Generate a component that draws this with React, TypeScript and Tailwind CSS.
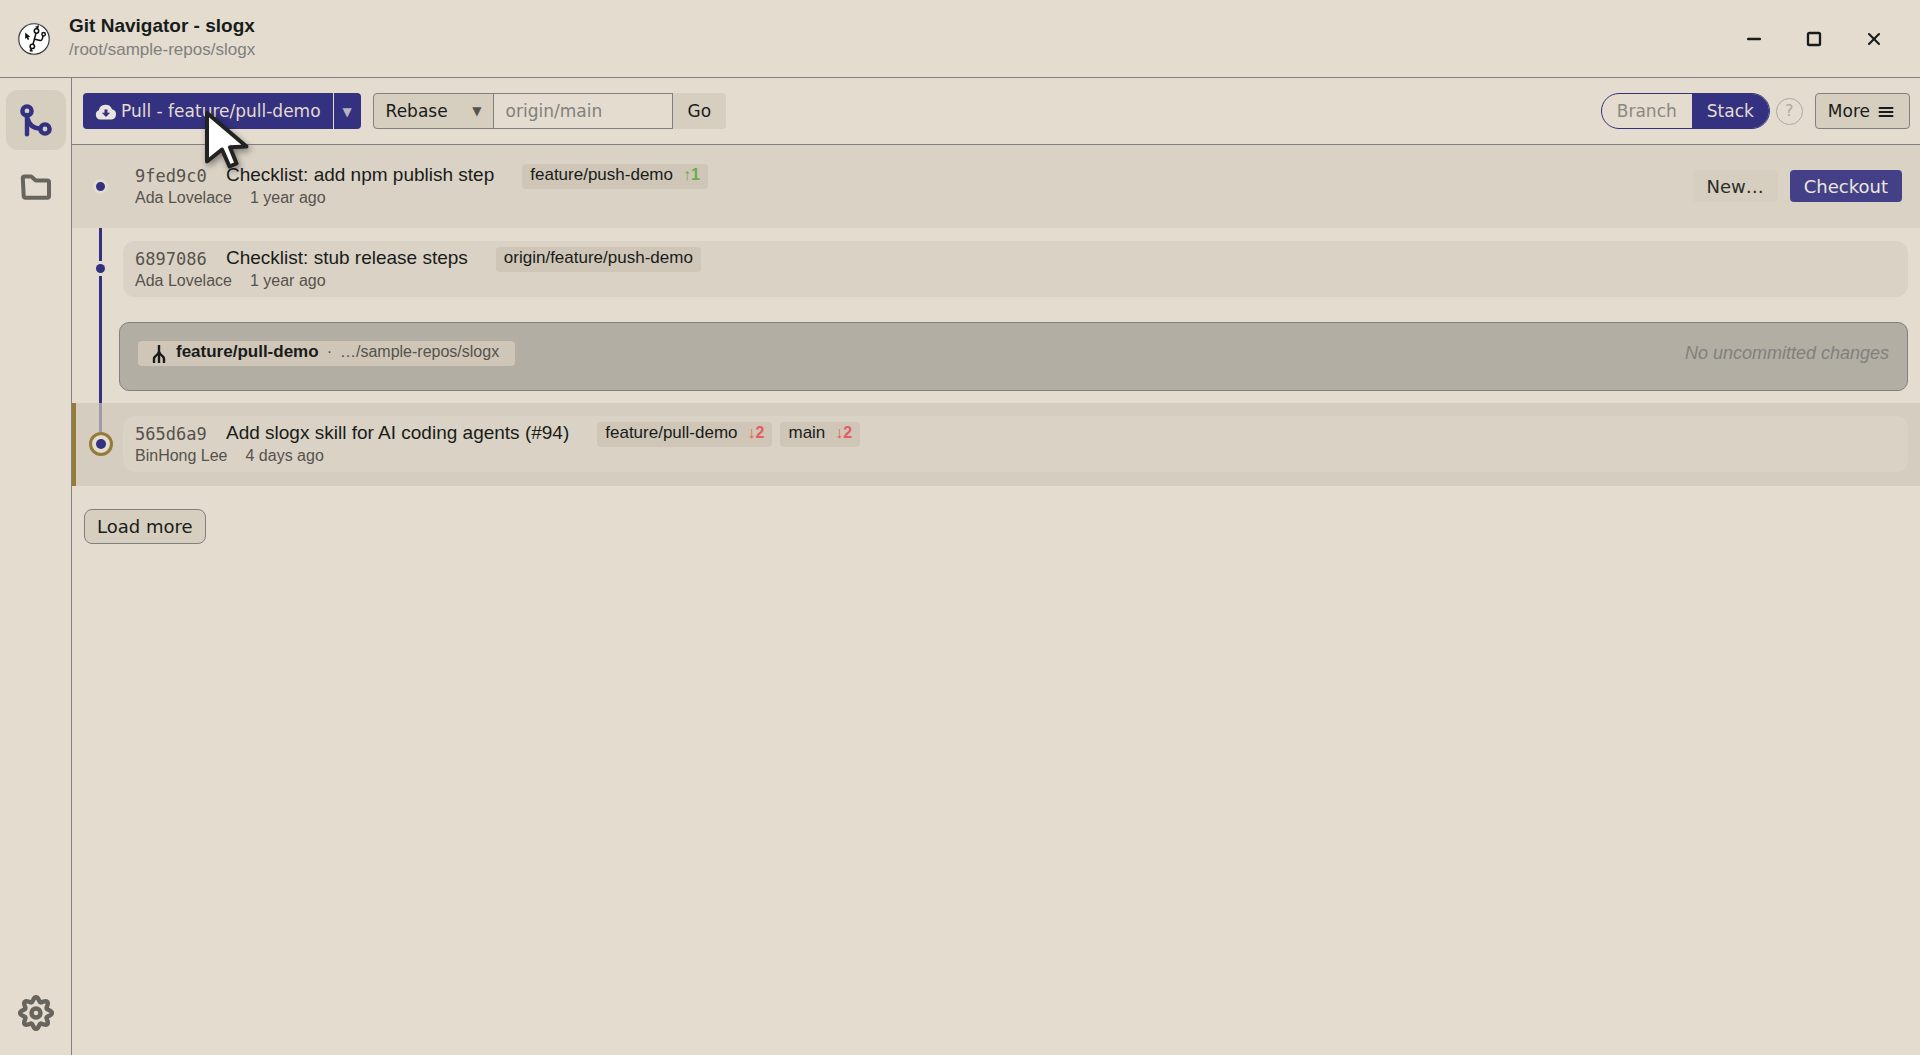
import { useState } from "react";
import { Minus, Square, X } from "lucide-react";

interface Branch {
    name: string;
    ahead?: number;
    behind?: number;
}

interface Commit {
    hash: string;
    title: string;
    author: string;
    date: string;
    branches: Branch[];
}

const COMMITS: Commit[] = [
    {
        hash: "9fed9c0",
        title: "Checklist: add npm publish step",
        author: "Ada Lovelace",
        date: "1 year ago",
        branches: [{ name: "feature/push-demo", ahead: 1 }],
    },
    {
        hash: "6897086",
        title: "Checklist: stub release steps",
        author: "Ada Lovelace",
        date: "1 year ago",
        branches: [{ name: "origin/feature/push-demo" }],
    },
    {
        hash: "565d6a9",
        title: "Add slogx skill for AI coding agents (#94)",
        author: "BinHong Lee",
        date: "4 days ago",
        branches: [
            { name: "feature/pull-demo", behind: 2 },
            { name: "main", behind: 2 },
        ],
    },
];

// eight soft teeth around the centre of a 36x36 box
const GEAR_POINTS = Array.from({ length: 128 }, (_, i) => {
    const a = (i / 128) * Math.PI * 2;
    const r = 13.7 + 2.2 * Math.cos(8 * a);
    return `${(18 + r * Math.cos(a)).toFixed(2)},${(18 + r * Math.sin(a)).toFixed(2)}`;
}).join(" ");

function Logo() {
    return (
        <svg viewBox="0 0 34 34" className="h-[34px] w-[34px]" fill="none" stroke="#111" strokeWidth="1.5">
            <circle cx="17" cy="17" r="16.2" fill="#fff" stroke="#cfcbc0" strokeWidth="1" />
            <circle cx="17" cy="17" r="15.2" fill="#fff" stroke="#333" strokeWidth="1.1" />
            <circle cx="19.5" cy="9" r="2.2" />
            <circle cx="26.6" cy="12.2" r="1.7" />
            <circle cx="15.3" cy="24.4" r="2.2" />
            <path d="M19 11.200 16 22.200M20.400 6.800l.9-3.400M18.600 5h2.600M26 14l-.8 3q-.5 1.600-2 1.400l-5.400-1.200M14.500 26.600l-1 3M12.700 28.200l3 .9" />
            <path d="M8.200 10.600v6.400l1.500-1.200 1.100 2.200 1.400-.8-1-2 2-.5z" fill="#111" stroke="none" />
        </svg>
    );
}

function GraphIcon() {
    return (
        <svg viewBox="0 0 36 36" className="h-9 w-9" fill="none" stroke="#333180" strokeWidth="4.4">
            <circle cx="9" cy="9" r="4.6" />
            <circle cx="27" cy="27" r="4.6" />
            <path d="M9 13v19.200" strokeLinecap="round" />
            <path d="M9.500 16c1.500 7 6 10.500 13 10.500" />
        </svg>
    );
}

function FolderIcon() {
    return (
        <svg viewBox="0 0 36 36" className="h-9 w-9" fill="none" stroke="#67655e" strokeWidth="4" strokeLinejoin="round">
            <path d="M4.800 8.200q0-1.700 1.700-1.700h6.700l4.600 4h11.500q1.700 0 1.700 1.700V26q0 1.800-1.700 1.800H7.500q-1.700 0-1.800-1.800z" />
        </svg>
    );
}

function GearIcon() {
    return (
        <svg viewBox="0 0 36 36" className="h-9 w-9" fill="none" stroke="#67655e" strokeWidth="4.4">
            <circle cx="18" cy="18" r="4.5" />
            <polygon points={GEAR_POINTS} strokeLinejoin="round" />
        </svg>
    );
}

function CloudDownIcon() {
    return (
        <svg viewBox="0 0 22 16" className="h-4 w-[22px]">
            <path d="M5.200 15.500A4.800 4.800 0 0 1 3.800 6.300 6.900 6.900 0 0 1 17 5.300a5.200 5.200 0 0 1-.4 10.200z" fill="#e9e5dc" />
            <path d="M9.500 5.500h3v3.300h2.700L11 13 6.800 8.800h2.700z" fill="#333180" />
        </svg>
    );
}

function WorktreeIcon() {
    return (
        <svg viewBox="0 0 14 18" className="h-[18px] w-[14px]" fill="none" stroke="#181c1a" strokeWidth="2.4">
            <path d="M7 0v18M7 6.500Q6.500 9 4.200 10.500 2 12 2 14v4M7 6.500q.5 2.500 2.800 4Q12 12 12 14v4" />
        </svg>
    );
}

function MenuIcon() {
    return (
        <svg viewBox="0 0 16 12" className="h-3 w-4" stroke="#181c1a" strokeWidth="2" strokeLinecap="round">
            <path d="M1.500 2h13M1.500 6h13M1.500 10h13" />
        </svg>
    );
}

function Cursor() {
    return (
        <svg
            viewBox="0 0 60 70"
            className="pointer-events-none absolute top-[104px] left-[197px] h-[70px] w-[60px] drop-shadow-[2px_3px_3px_rgba(0,0,0,0.4)]"
        >
            <path d="M10 9v48.500L25 45.500l7.500 17 7-3L33 43.300l16.500-.8z" fill="#fff" stroke="#222" strokeWidth="4" strokeLinejoin="round" />
        </svg>
    );
}

function BranchTag({ branch }: { branch: Branch }) {
    return (
        <span className="flex h-[25px] items-center gap-2.5 rounded bg-[#cfc6b8] px-2 pb-0.5 text-[17px]">
            {branch.name}
            {branch.ahead && <b className="text-base text-[#66ad4e]">↑{branch.ahead}</b>}
            {branch.behind && <b className="text-base text-[#e45d5d]">↓{branch.behind}</b>}
        </span>
    );
}

function CommitRow({ commit, state }: { commit: Commit; state?: "hovered" | "current" }) {
    return (
        <li
            className={
                state === "hovered"
                    ? "flex h-[83px] bg-[#dad2c5]"
                    : state === "current"
                      ? "flex h-[83px] bg-[#d5cdbf]"
                      : "flex h-[83px]"
            }
        >
            {state === "current" && <div className="w-1 bg-[#957b3a]" />}
            <div className={state === "current" ? "flex w-[47px] flex-col items-center pl-0.5" : "flex w-[51px] flex-col items-center pl-1.5"}>
                {state === "hovered" && (
                    <span className="mt-[34px] h-[15px] w-[15px] shrink-0 rounded-full border-3 border-[#e3dccf] bg-[#333180]" />
                )}
                {!state && (
                    <>
                        <span className="h-[33px] w-[3px] bg-[#333180]" />
                        <span className="my-[3px] h-[9px] w-[9px] rounded-full bg-[#333180]" />
                        <span className="w-[3px] flex-1 bg-[#333180]" />
                    </>
                )}
                {state === "current" && (
                    <>
                        <span className="h-[29px] w-[3px] bg-[#9f9aa5]" />
                        <span className="flex h-6 w-6 items-center justify-center rounded-full border-3 border-[#957b3a] bg-[#e3dccf]">
                            <span className="h-[10px] w-[10px] rounded-full bg-[#333180]" />
                        </span>
                    </>
                )}
            </div>
            <div className="mt-[13px] mr-3 flex h-14 flex-1 items-center rounded-xl bg-[#dad2c5] pl-3">
                <div className="flex flex-1 flex-col self-start">
                    <div className="flex h-9 items-center">
                        <code className="w-[91px] pt-0.5 font-['DejaVu_Sans_Mono',monospace] text-[17px] text-[#55534c]">{commit.hash}</code>
                        <span className="mr-7 pb-0.5 text-[19px]">{commit.title}</span>
                        <span className="flex gap-2">
                            {commit.branches.map((b) => (
                                <BranchTag key={b.name} branch={b} />
                            ))}
                        </span>
                    </div>
                    <div className="-mt-1.5 flex h-5 gap-[18px] text-base leading-5 text-[#55534c]">
                        <span>{commit.author}</span>
                        <span>{commit.date}</span>
                    </div>
                </div>
                {state === "hovered" && (
                    <div className="mr-1.5 flex gap-3 font-['DejaVu_Sans',sans-serif] text-lg">
                        <button className="h-8 rounded bg-[#d6cebf] px-3.5 pt-0.5 text-[#2b2d2a]">New…</button>
                        <button className="h-8 rounded bg-[#444087] px-3.5 pt-0.5 text-[#ebe6dd]">Checkout</button>
                    </div>
                )}
            </div>
        </li>
    );
}

function WorktreeRow() {
    return (
        <li className="flex h-[92px]">
            <div className="flex w-[47px] justify-center pl-2.5">
                <span className="w-[3px] bg-[#333180]" />
            </div>
            <div className="mt-[11px] mr-3 mb-3 flex flex-1 items-start justify-between rounded-[10px] border border-[#808080] bg-[#b3aea3] px-[18px] pt-[18px]">
                <span className="flex h-[25px] items-center rounded bg-[#cfc6b8] pr-4 pl-3.5 text-base">
                    <WorktreeIcon />
                    <b className="ml-2.5 pb-1 text-[17px]">feature/pull-demo</b>
                    <span className="pb-1 pl-2 text-[#55534c]">·</span>
                    <span className="pb-1 pl-2 text-[#55534c]">…/sample-repos/slogx</span>
                </span>
                <em className="text-lg leading-6 text-[#808080]">No uncommitted changes</em>
            </div>
        </li>
    );
}

function Toolbar() {
    const [mode, setMode] = useState("rebase");
    const [target, setTarget] = useState("");

    return (
        <div className="flex h-[67px] items-center border-b border-[#808080] pr-[10px] pl-[11px] font-['DejaVu_Sans',sans-serif] text-[17px]">
            <div className="flex h-9 overflow-hidden rounded text-[#e3dccf]">
                <button className="flex items-center gap-1 bg-[#333180] px-3 pt-0.5">
                    <CloudDownIcon />
                    Pull - feature/pull-demo
                </button>
                <button aria-label="Pull options" className="ml-px w-[27px] bg-[#333180] pt-0.5 text-xs text-[#b9b5c0]">
                    ▼
                </button>
            </div>

            <form className="ml-3 flex h-9" onSubmit={(e) => e.preventDefault()}>
                <div className="relative flex">
                    <select
                        aria-label="Operation"
                        value={mode}
                        onChange={(e) => setMode(e.target.value)}
                        className="w-[121px] appearance-none rounded-l border border-[#808080] bg-[#d6cebf] pt-0.5 pl-3"
                    >
                        <option value="rebase">Rebase</option>
                        <option value="merge">Merge</option>
                    </select>
                    <span className="pointer-events-none absolute top-2 right-3 text-xs leading-5 text-[#55534c]">▼</span>
                </div>
                <input
                    aria-label="Target branch"
                    placeholder="origin/main"
                    value={target}
                    onChange={(e) => setTarget(e.target.value)}
                    className="-ml-px w-[180px] border border-[#808080] px-3 pt-0.5 placeholder:text-[#808080]"
                />
                <button className="rounded-r bg-[#d6cebf] px-[15px] pt-0.5">Go</button>
            </form>

            <div className="ml-auto flex h-9 overflow-hidden rounded-full border border-[#333180]">
                <button className="px-[15px] pt-0.5 text-[#8a8883]">Branch</button>
                <button className="bg-[#333180] px-[15px] pt-0.5 text-[#e3dccf]">Stack</button>
            </div>
            <button className="ml-1.5 flex h-[27px] w-[27px] items-center justify-center rounded-full border border-[#aca8a0] text-base text-[#aca8a0]">
                ?
            </button>
            <button className="ml-3 flex h-9 items-center gap-2 rounded border border-[#808080] bg-[#d6cebf] pt-0.5 pr-[15px] pl-3">
                More
                <MenuIcon />
            </button>
        </div>
    );
}

export default function App() {
    return (
        <div className="relative flex min-h-screen flex-col bg-[#e3dccf] font-['Liberation_Sans',sans-serif] text-[#181c1a]">
            <header className="flex h-[78px] items-center border-b border-[#808080] pl-[17px]">
                <Logo />
                <div className="ml-[18px] pb-0.5">
                    <h1 className="text-[19px] leading-6 font-bold">Git Navigator - slogx</h1>
                    <p className="text-[17px] leading-6 text-[#808080]">/root/sample-repos/slogx</p>
                </div>
                <div className="mr-4 ml-auto flex items-center">
                    <button aria-label="Minimize" className="flex w-[60px] justify-center">
                        <Minus size={20} strokeWidth={3} />
                    </button>
                    <button aria-label="Maximize" className="flex w-[60px] justify-center">
                        <Square size={16} strokeWidth={3.5} />
                    </button>
                    <button aria-label="Close" className="flex w-[60px] justify-center">
                        <X size={20} strokeWidth={2.5} />
                    </button>
                </div>
            </header>

            <div className="flex flex-1">
                <nav className="flex w-[72px] flex-col items-center border-r border-[#808080] pt-3 pb-3">
                    <button aria-label="Commits" className="flex h-[60px] w-[60px] items-center justify-center rounded-xl bg-[#d6cebf]">
                        <GraphIcon />
                    </button>
                    <button aria-label="Files" className="mt-2 flex h-[60px] w-[60px] items-center justify-center">
                        <FolderIcon />
                    </button>
                    <button aria-label="Settings" className="mt-auto flex h-[60px] w-[60px] items-center justify-center">
                        <GearIcon />
                    </button>
                </nav>

                <main className="flex-1">
                    <Toolbar />
                    <ul>
                        <CommitRow commit={COMMITS[0]} state="hovered" />
                        <CommitRow commit={COMMITS[1]} />
                        <WorktreeRow />
                        <CommitRow commit={COMMITS[2]} state="current" />
                    </ul>
                    <button className="mt-[23px] ml-3 h-[35px] rounded-lg border border-[#808080] bg-[#d6cebf] px-3 font-['DejaVu_Sans',sans-serif] text-lg leading-none">
                        Load more
                    </button>
                </main>
            </div>

            <Cursor />
        </div>
    );
}
